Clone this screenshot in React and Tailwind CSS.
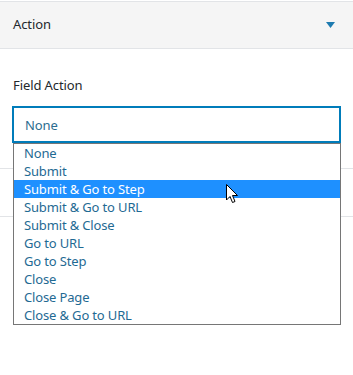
import React from "react";

const items = [
  "None",
  "Submit",
  "Submit & Go to Step",
  "Submit & Go to URL",
  "Submit & Close",
  "Go to URL",
  "Go to Step",
  "Close",
  "Close Page",
  "Close & Go to URL",
];

export default function App() {
  return (
    <div
      className="relative w-[353px] h-[375px] bg-white overflow-hidden"
      style={{ fontFamily: '"Noto Sans", "Open Sans", sans-serif' }}
    >
      <div className="pt-px">
        <div className="h-[48px] border-y border-[#e2e4e7] bg-[#f5f5f5] flex items-center justify-between pl-[13px] pr-[18px]">
          <span className="text-[13px] text-[#23282d] tracking-[-0.1px]">Action</span>
          <svg width="9" height="6" viewBox="0 0 9 6">
            <path d="M0 0 H9 L4.5 6 Z" fill="#1e7bb0" />
          </svg>
        </div>
      </div>
      <div className="px-[12px] pt-[27px]">
        <div className="text-[13px] text-[#23282d] leading-[18px] pl-px tracking-[-0.1px]">Field Action</div>
        <div className="relative mt-[12px]">
          <div className="h-[37px] border-2 border-[#007cba] flex items-center pt-[3px] pl-[11px] text-[13px] text-[#2b6d8f] tracking-[-0.1px]">
            None
          </div>
          <div className="absolute left-px right-0 top-[37px] border border-[#767676] bg-white z-10">
            {items.map((it, i) => (
              <div
                key={it}
                className={
                  "h-[18px] leading-[18px] pl-[10px] text-[13px] tracking-[-0.15px] " +
                  (i === 2 ? "bg-[#1e90ff] text-white" : "text-[#1f6a93]")
                }
              >
                {it}
              </div>
            ))}
          </div>
        </div>
      </div>
      <div className="h-[25px]" />
      <div className="border-b border-[#e2e4e7]" />
      <div className="h-[47px]" />
      <div className="border-b border-[#e2e4e7]" />
      <svg
        className="absolute left-[226px] top-[184px] z-20"
        width="13"
        height="20"
        viewBox="0 0 13 20"
      >
        <path
          d="M0.5 0.5 L0.5 16 L4 12.5 L6.5 18.5 L9 17.5 L6.5 11.5 L11.5 11.5 Z"
          fill="white"
          stroke="black"
          strokeWidth="1"
          strokeLinejoin="miter"
        />
      </svg>
    </div>
  );
}
